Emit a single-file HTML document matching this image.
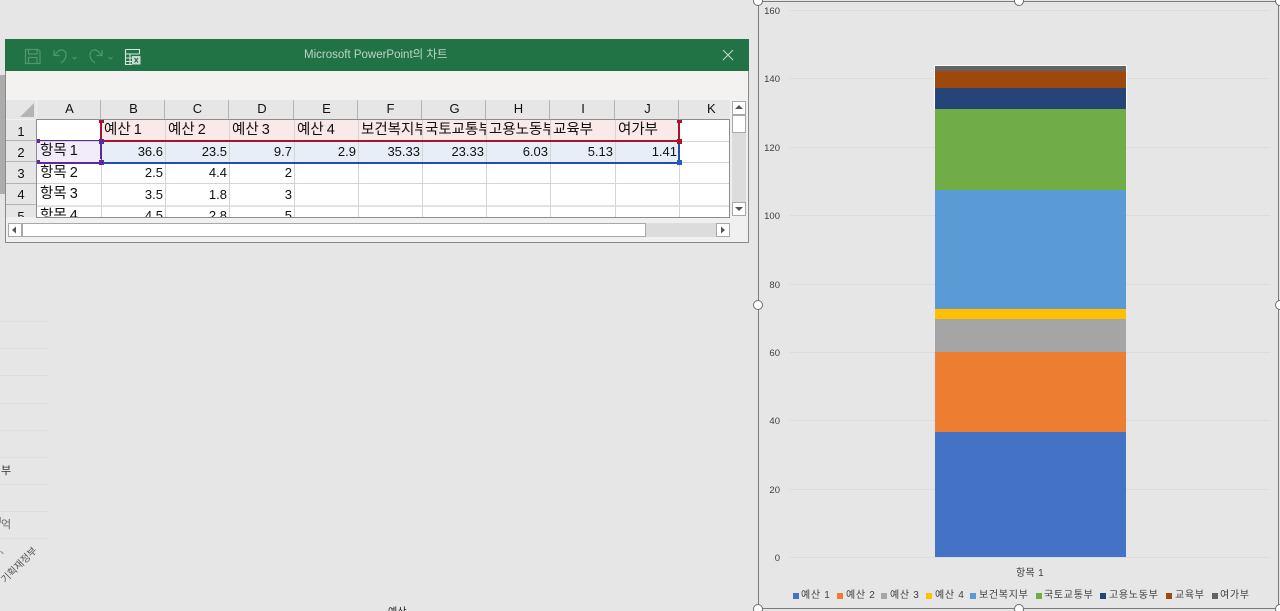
<!DOCTYPE html>
<html lang="ko"><head><meta charset="utf-8"><title>Chart</title>
<style>
html,body{margin:0;padding:0;width:1280px;height:611px;overflow:hidden;background:#e6e6e6}
body{position:relative;font-family:"Liberation Sans","Noto Sans CJK KR",sans-serif;color:#000}
.a{position:absolute}
.hc{position:absolute;top:100px;height:19px;background:#e6e6e6;border-right:1px solid #b4b4b4;font-size:13px;line-height:17px;text-align:center;color:#111;box-sizing:content-box;text-indent:2px}
.rh{position:absolute;left:6px;width:30px;background:#e6e6e6;border-bottom:1px solid #b4b4b4;font-size:13px;text-align:center;color:#111;box-sizing:border-box;overflow:hidden}
.c{position:absolute;font-size:14.5px;word-spacing:-1px;line-height:20px;white-space:nowrap;overflow:hidden;box-sizing:border-box;padding:0 3px;color:#111}
.r{text-align:right;font-size:13px;padding:0 2px;word-spacing:0}
.vl{position:absolute;width:1px;background:#d4d4d4;top:120px;height:97px}
.hl{position:absolute;height:1px;background:#d4d4d4;left:37px;width:692px}
.h{position:absolute;width:5px;height:5px}
.tick{position:absolute;left:760px;width:20px;text-align:right;font-size:9.5px;line-height:12px;color:#404040}
.gl{position:absolute;left:790px;width:480px;height:1px;background:#dcdcdc}
.seg{position:absolute;left:935px;width:191px}
.lg{position:absolute;top:590px;font-size:10px;letter-spacing:.7px;line-height:12px;color:#404040;white-space:nowrap}
.sw{position:absolute;top:593px;width:6px;height:6px}
.lgl{position:absolute;left:0;width:48px;height:1px;background:#dedede}
.ring{position:absolute;width:8px;height:8px;border-radius:50%;background:#fff;border:1px solid #6e6e6e}
</style></head><body>

<!-- left background fragments -->
<div class="a" style="left:0;top:75px;width:5px;height:119px;background:#acacac"></div>
<div class="lgl" style="top:321px"></div><div class="lgl" style="top:348px"></div><div class="lgl" style="top:375px"></div>
<div class="lgl" style="top:403px"></div><div class="lgl" style="top:430px"></div><div class="lgl" style="top:457px"></div>
<div class="lgl" style="top:484px"></div><div class="lgl" style="top:511px"></div><div class="lgl" style="top:538px"></div>
<div class="a" style="left:1px;top:464px;font-size:11px;line-height:14px;color:#333">부</div>
<div class="a" style="left:1px;top:518px;font-size:11px;line-height:14px;color:#666">억</div>
<div class="a" style="left:0;top:517px;width:1px;height:6px;background:#999"></div>
<div class="a" style="left:0;top:552px;width:4px;height:1px;background:#888;transform:rotate(45deg)"></div>
<div class="a" style="left:-3px;top:560px;font-size:10px;line-height:12px;color:#555;transform:rotate(-45deg);white-space:nowrap">기획재정부</div>
<div class="a" style="left:388px;top:607px;font-size:10px;line-height:12px;color:#222">예산</div>

<!-- window -->
<div class="a" style="left:5px;top:39px;width:744px;height:204px;background:#f0f0f0;outline:1px solid #8a8a8a;outline-offset:-1px"></div>
<div class="a" style="left:5px;top:39px;width:744px;height:32px;background:#217346"></div>
<div class="a" style="left:6px;top:71px;width:742px;height:29px;background:#f3f2f1"></div>
<div class="a" style="left:304px;top:48px;width:150px;font-size:11.5px;line-height:15px;color:#b9d5c5;white-space:nowrap">Microsoft PowerPoint의 차트</div>

<svg class="a" style="left:20px;top:44px" width="130" height="24" viewBox="0 0 130 24" fill="none">
<g stroke="#4f9770" stroke-width="1.2">
<path d="M5.5 5.500H18L20 7.500V19.500H5.500Z"/><path d="M8.500 5.500V10H17V5.500"/><path d="M8.500 19.500V13.500H17V19.500"/>
<path d="M34 6V11.500H39.500"/><path d="M34 11.500L38 7.500C41 4.500 46 6 46 11C46 14 44 17 41 19"/>
<path d="M52.500 13L54.500 15L56.500 13" stroke-width="1"/>
<path d="M82 6V11.500H76.500"/><path d="M82 11.500L78 7.500C75 4.500 70 6 70 11C70 14 72 17 75 19"/>
<path d="M88.500 13L90.500 15L92.500 13" stroke-width="1"/>
</g>
<g stroke="#d6e6dc" stroke-width="1.100"><path d="M105.500 5.500H119.500V10"/><path d="M105.500 5.500V20.500H112"/><path d="M105.500 10H119.500M105.500 14H112M105.500 17.500H112M110 10V20.500"/></g>
<rect x="112" y="12" width="8.500" height="8.500" fill="#c6dccf"/>
<path d="M114.500 14L118 18.500M118 14L114.500 18.500" stroke="#217346" stroke-width="1.100"/>
</svg>
<svg class="a" style="left:722px;top:49px" width="12" height="12"><path d="M1 1L11 11M11 1L1 11" stroke="#c5dccf" stroke-width="1"/></svg>

<!-- sheet white -->
<div class="a" style="left:37px;top:120px;width:692px;height:97px;background:#fff"></div>

<!-- headers -->
<div class="a" style="left:6px;top:100px;width:30px;height:19px;background:#e6e6e6"></div>
<svg class="a" style="left:20px;top:102px" width="15" height="16"><path d="M14 1V15H0Z" fill="#b4b4b4"/></svg>
<div class="hc" style="left:37px;width:63px">A</div>
<div class="hc" style="left:101px;width:63px">B</div>
<div class="hc" style="left:165px;width:63px">C</div>
<div class="hc" style="left:229px;width:64px">D</div>
<div class="hc" style="left:294px;width:63px">E</div>
<div class="hc" style="left:358px;width:63px">F</div>
<div class="hc" style="left:422px;width:63px">G</div>
<div class="hc" style="left:486px;width:63px">H</div>
<div class="hc" style="left:550px;width:64px">I</div>
<div class="hc" style="left:615px;width:63px">J</div>
<div class="hc" style="left:679px;width:51px;border:0;text-align:left;text-indent:28px">K</div>

<div class="rh" style="top:120px;height:21px;line-height:24px">1</div>
<div class="rh" style="top:141px;height:21px;line-height:24px">2</div>
<div class="rh" style="top:162px;height:22px;line-height:23px">3</div>
<div class="rh" style="top:184px;height:21px;line-height:21px">4</div>
<div class="rh" style="top:205px;height:12px;line-height:23px;border:0">5</div>

<!-- fills -->
<div class="a" style="left:101px;top:120px;width:578px;height:21px;background:#f9e9e8"></div>
<div class="a" style="left:101px;top:142px;width:578px;height:20px;background:#e8eef8"></div>
<div class="a" style="left:37px;top:142px;width:64px;height:20px;background:#f1ecf7"></div>

<!-- grid -->
<div class="hl" style="top:141px"></div><div class="hl" style="top:162px"></div><div class="hl" style="top:183px"></div><div class="hl" style="top:205px;height:2px;background:#e2e2e2"></div>
<div class="vl" style="left:101px"></div><div class="vl" style="left:165px"></div><div class="vl" style="left:229px"></div><div class="vl" style="left:294px"></div>
<div class="vl" style="left:358px"></div><div class="vl" style="left:422px"></div><div class="vl" style="left:486px"></div><div class="vl" style="left:550px"></div>
<div class="vl" style="left:615px"></div><div class="vl" style="left:679px"></div>

<!-- cells -->
<div class="c" style="left:101px;top:120px;width:64px">예산 1</div>
<div class="c" style="left:165px;top:120px;width:64px">예산 2</div>
<div class="c" style="left:229px;top:120px;width:65px">예산 3</div>
<div class="c" style="left:294px;top:120px;width:64px">예산 4</div>
<div class="c" style="left:358px;top:120px;width:64px">보건복지부</div>
<div class="c" style="left:422px;top:120px;width:64px">국토교통부</div>
<div class="c" style="left:486px;top:120px;width:64px">고용노동부</div>
<div class="c" style="left:550px;top:120px;width:65px">교육부</div>
<div class="c" style="left:615px;top:120px;width:64px">여가부</div>

<div class="c" style="left:37px;top:141px;width:64px">항목 1</div>
<div class="c r" style="left:101px;top:142px;width:64px">36.6</div>
<div class="c r" style="left:165px;top:142px;width:64px">23.5</div>
<div class="c r" style="left:229px;top:142px;width:65px">9.7</div>
<div class="c r" style="left:294px;top:142px;width:64px">2.9</div>
<div class="c r" style="left:358px;top:142px;width:64px">35.33</div>
<div class="c r" style="left:422px;top:142px;width:64px">23.33</div>
<div class="c r" style="left:486px;top:142px;width:64px">6.03</div>
<div class="c r" style="left:550px;top:142px;width:65px">5.13</div>
<div class="c r" style="left:615px;top:142px;width:64px">1.41</div>

<div class="c" style="left:37px;top:163px;width:64px">항목 2</div>
<div class="c r" style="left:101px;top:163px;width:64px">2.5</div>
<div class="c r" style="left:165px;top:163px;width:64px">4.4</div>
<div class="c r" style="left:229px;top:163px;width:65px">2</div>
<div class="c" style="left:37px;top:184px;width:64px">항목 3</div>
<div class="c r" style="left:101px;top:185px;width:64px">3.5</div>
<div class="c r" style="left:165px;top:185px;width:64px">1.8</div>
<div class="c r" style="left:229px;top:185px;width:65px">3</div>
<div class="c" style="left:37px;top:206px;width:64px;height:11px">항목 4</div>
<div class="c r" style="left:101px;top:206px;width:64px;height:11px">4.5</div>
<div class="c r" style="left:165px;top:206px;width:64px;height:11px">2.8</div>
<div class="c r" style="left:229px;top:206px;width:65px;height:11px">5</div>

<!-- sheet border -->
<div class="a" style="left:36px;top:119px;width:692px;height:97px;border:1px solid #8c8c8c"></div>

<!-- red range -->
<div class="a" style="left:101px;top:140px;width:578px;height:2px;background:#a5162c"></div>
<div class="a" style="left:100px;top:120px;width:2px;height:21px;background:#a5162c"></div>
<div class="a" style="left:678px;top:120px;width:2px;height:21px;background:#a5162c"></div>
<div class="h" style="left:99px;top:120px;height:3px;background:#a5162c"></div>
<div class="h" style="left:677px;top:120px;height:3px;background:#a5162c"></div>
<div class="h" style="left:677px;top:139px;background:#a5162c"></div>
<!-- blue range -->
<div class="a" style="left:101px;top:162px;width:578px;height:1px;background:#1f4fb0;box-shadow:0 1px 0 #1f4fb0"></div>
<div class="a" style="left:101px;top:144px;width:1px;height:17px;background:#1f4fb0"></div>
<div class="a" style="left:678px;top:144px;width:2px;height:17px;background:#1f4fb0"></div>
<div class="h" style="left:677px;top:160px;background:#1f5fc0"></div>
<!-- purple range -->
<div class="a" style="left:39px;top:140px;width:62px;height:1px;background:#5b2a9e"></div>
<div class="a" style="left:39px;top:162px;width:62px;height:1px;background:#5b2a9e;box-shadow:0 1px 0 #5b2a9e"></div>
<div class="a" style="left:100px;top:144px;width:2px;height:15px;background:#5b2a9e"></div>
<div class="h" style="left:37px;top:139px;width:3px;height:4px;background:#5b2a9e"></div>
<div class="h" style="left:37px;top:160px;width:3px;height:4px;background:#5b2a9e"></div>
<div class="h" style="left:99px;top:139px;background:#5b2a9e"></div>
<div class="h" style="left:99px;top:160px;background:#5b2a9e"></div>

<!-- v scrollbar -->
<div class="a" style="left:732px;top:101px;width:14px;height:115px;background:#dcdcdc"></div>
<div class="a" style="left:732px;top:101px;width:12px;height:12px;background:#fff;border:1px solid #a8a8a8"></div>
<div class="a" style="left:732px;top:115px;width:12px;height:16px;background:#fff;border:1px solid #a8a8a8"></div>
<div class="a" style="left:732px;top:202px;width:12px;height:12px;background:#fff;border:1px solid #a8a8a8"></div>
<svg class="a" style="left:734px;top:104px" width="10" height="8"><path d="M5 1L9 5H1Z" fill="#555"/></svg>
<svg class="a" style="left:734px;top:205px" width="10" height="8"><path d="M5 6L9 2H1Z" fill="#555"/></svg>
<!-- h scrollbar -->
<div class="a" style="left:8px;top:223px;width:721px;height:14px;background:#dcdcdc"></div>
<div class="a" style="left:8px;top:223px;width:12px;height:12px;background:#fff;border:1px solid #a8a8a8"></div>
<div class="a" style="left:22px;top:223px;width:622px;height:12px;background:#fff;border:1px solid #a8a8a8"></div>
<div class="a" style="left:716px;top:223px;width:12px;height:12px;background:#fff;border:1px solid #a8a8a8"></div>
<svg class="a" style="left:10px;top:225px" width="8" height="10"><path d="M2 5L6 1.500V8.500Z" fill="#555"/></svg>
<svg class="a" style="left:719px;top:225px" width="8" height="10"><path d="M6 5L2 1.500V8.500Z" fill="#555"/></svg>

<!-- chart frame -->
<div class="a" style="left:758px;top:1px;width:521px;height:608px;box-sizing:border-box;border:1px solid #7c7c7c"></div>

<div class="gl" style="top:10px"></div><div class="gl" style="top:78px"></div><div class="gl" style="top:147px"></div><div class="gl" style="top:215px"></div>
<div class="gl" style="top:284px"></div><div class="gl" style="top:352px"></div><div class="gl" style="top:420px"></div><div class="gl" style="top:489px"></div><div class="gl" style="top:557px"></div>

<div class="tick" style="top:6px">160</div><div class="tick" style="top:74px">140</div><div class="tick" style="top:143px">120</div><div class="tick" style="top:211px">100</div>
<div class="tick" style="top:280px">80</div><div class="tick" style="top:348px">60</div><div class="tick" style="top:416px">40</div><div class="tick" style="top:485px">20</div><div class="tick" style="top:553px">0</div>

<!-- bars -->
<div class="a" style="left:934px;top:65px;width:193px;height:44px;background:#fff"></div>
<div class="seg" style="top:66px;height:5px;background:#636363"></div>
<div class="seg" style="top:71px;height:17px;background:#9e480e"></div>
<div class="seg" style="top:88px;height:21px;background:#264478"></div>
<div class="seg" style="top:109px;height:81px;background:#70ad47"></div>
<div class="seg" style="top:190px;height:119px;background:#5b9bd5"></div>
<div class="seg" style="top:309px;height:10px;background:#ffc000"></div>
<div class="seg" style="top:319px;height:33px;background:#a5a5a5"></div>
<div class="seg" style="top:352px;height:80px;background:#ed7d31"></div>
<div class="seg" style="top:432px;height:125px;background:#4472c4"></div>

<div class="a" style="left:1016px;top:568px;font-size:10px;letter-spacing:.3px;line-height:12px;color:#404040">항목 1</div>

<!-- legend -->
<div class="sw" style="left:793px;background:#4472c4"></div><div class="lg" style="left:801px">예산 1</div>
<div class="sw" style="left:837px;background:#ed7d31"></div><div class="lg" style="left:846px">예산 2</div>
<div class="sw" style="left:881px;background:#a5a5a5"></div><div class="lg" style="left:890px">예산 3</div>
<div class="sw" style="left:926px;background:#ffc000"></div><div class="lg" style="left:935px">예산 4</div>
<div class="sw" style="left:970px;background:#5b9bd5"></div><div class="lg" style="left:979px">보건복지부</div>
<div class="sw" style="left:1036px;background:#70ad47"></div><div class="lg" style="left:1044px">국토교통부</div>
<div class="sw" style="left:1100px;background:#264478"></div><div class="lg" style="left:1109px">고용노동부</div>
<div class="sw" style="left:1166px;background:#9e480e"></div><div class="lg" style="left:1175px">교육부</div>
<div class="sw" style="left:1212px;background:#636363"></div><div class="lg" style="left:1220px">여가부</div>

<!-- selection handles -->
<div class="ring" style="left:753px;top:-4px"></div>
<div class="ring" style="left:1014px;top:-4px"></div>
<div class="ring" style="left:1275px;top:-4px"></div>
<div class="ring" style="left:753px;top:300px"></div>
<div class="ring" style="left:1275px;top:300px"></div>
<div class="ring" style="left:753px;top:604px"></div>
<div class="ring" style="left:1014px;top:604px"></div>
<div class="ring" style="left:1275px;top:604px"></div>

</body></html>
